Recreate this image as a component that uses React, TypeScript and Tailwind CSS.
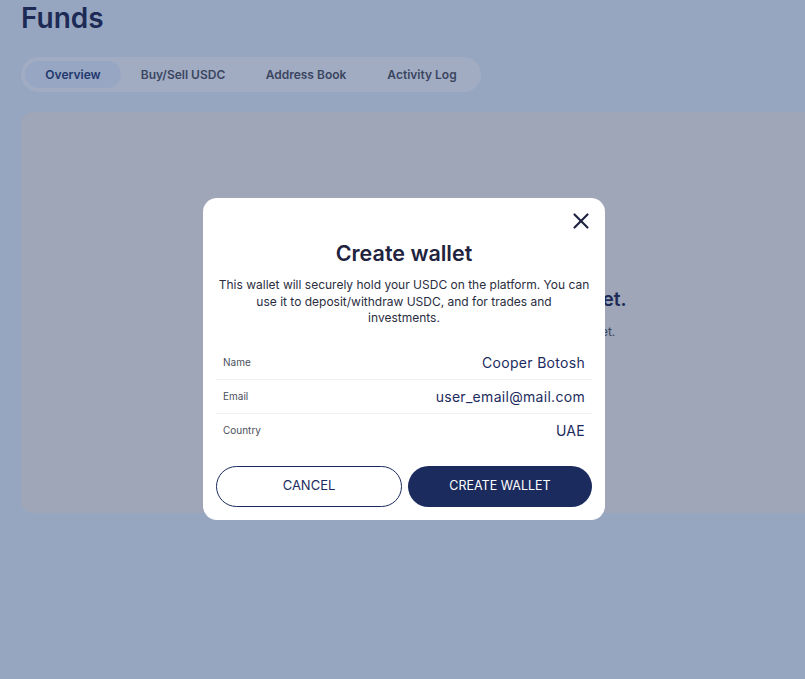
import { X } from 'lucide-react'

const tabs = [
  { label: 'Overview', w: 'w-[96px]' },
  { label: 'Buy/Sell USDC', w: 'w-[124px]' },
  { label: 'Address Book', w: 'w-[122px]' },
  { label: 'Activity Log', w: 'w-[110px]' },
]

const rows = [
  { label: 'Name', value: 'Cooper Botosh' },
  { label: 'Email', value: 'user_email@mail.com' },
  { label: 'Country', value: 'UAE' },
]

export default function App() {
  return (
    <div className="relative h-[679px] w-[805px] overflow-hidden bg-[#97a6c0] font-['Inter',sans-serif]">
      {/* page behind the overlay */}
      <div className="px-[21px] pt-[3px]">
        <h1 className="text-[28px] font-semibold leading-[30px] text-[#1c2a55]">Funds</h1>

        <div className="mt-[24px] flex h-[35px] w-[460px] items-center rounded-full bg-[#a1acc3] px-[4px]">
          {tabs.map((t, i) => (
            <div
              key={t.label}
              className={
                i === 0
                  ? `flex h-[27px] ${t.w} items-center justify-center rounded-full bg-[#97a6c2] text-[12px] font-semibold text-[#22386d]`
                  : `flex h-[27px] ${t.w} items-center justify-center text-[12px] font-semibold text-[#3a4560]`
              }
            >
              {t.label}
            </div>
          ))}
        </div>

        <div className="mt-[20px] flex h-[401px] w-[960px] flex-col items-center rounded-[12px] bg-[#9ea6b7] pt-[174px]">
          <p className="text-[19px] font-semibold text-[#1c2a55]">You don&apos;t have a wallet yet.</p>
          <p className="mt-[8px] text-[12px] text-[#3a4560]">You have not created a USDC wallet yet.</p>
        </div>
      </div>

      {/* modal */}
      <div className="absolute left-[203px] top-[198px] w-[402px] rounded-[14px] bg-white px-[13px] pb-[13px] pt-[10px]">
        <div className="-mr-[2px] flex justify-end">
          <X size={26} strokeWidth={2} className="text-[#1f2340]" />
        </div>
        <h2 className="mt-[6px] text-center text-[21.5px] font-semibold leading-[26px] text-[#1f2340]">Create wallet</h2>
        <p className="mt-[11px] text-center text-[12px] leading-[16.5px] text-[#2a2d40]">
          This wallet will securely hold your USDC on the platform. You can
          <br />
          use it to deposit/withdraw USDC, and for trades and
          <br />
          investments.
        </p>

        <div className="mt-[19px]">
          {rows.map((r, i) => (
            <div
              key={r.label}
              className={
                i < rows.length - 1
                  ? 'flex h-[34px] items-center justify-between border-b border-[#eef0f4] px-[7px]'
                  : 'flex h-[34px] items-center justify-between px-[7px]'
              }
            >
              <span className="text-[10px] text-[#4b4f5c]">{r.label}</span>
              <span className="text-[14px] tracking-[0.3px] text-[#1c2b5e]">{r.value}</span>
            </div>
          ))}
        </div>

        <div className="mt-[18px] flex gap-[6px]">
          <button className="h-[41px] flex-1 rounded-full border border-[#1c2b5e] bg-white text-[13px] text-[#1c2b5e]">
            CANCEL
          </button>
          <button className="h-[41px] flex-1 rounded-full bg-[#1b2b5e] text-[12.5px] text-white">CREATE WALLET</button>
        </div>
      </div>
    </div>
  )
}
